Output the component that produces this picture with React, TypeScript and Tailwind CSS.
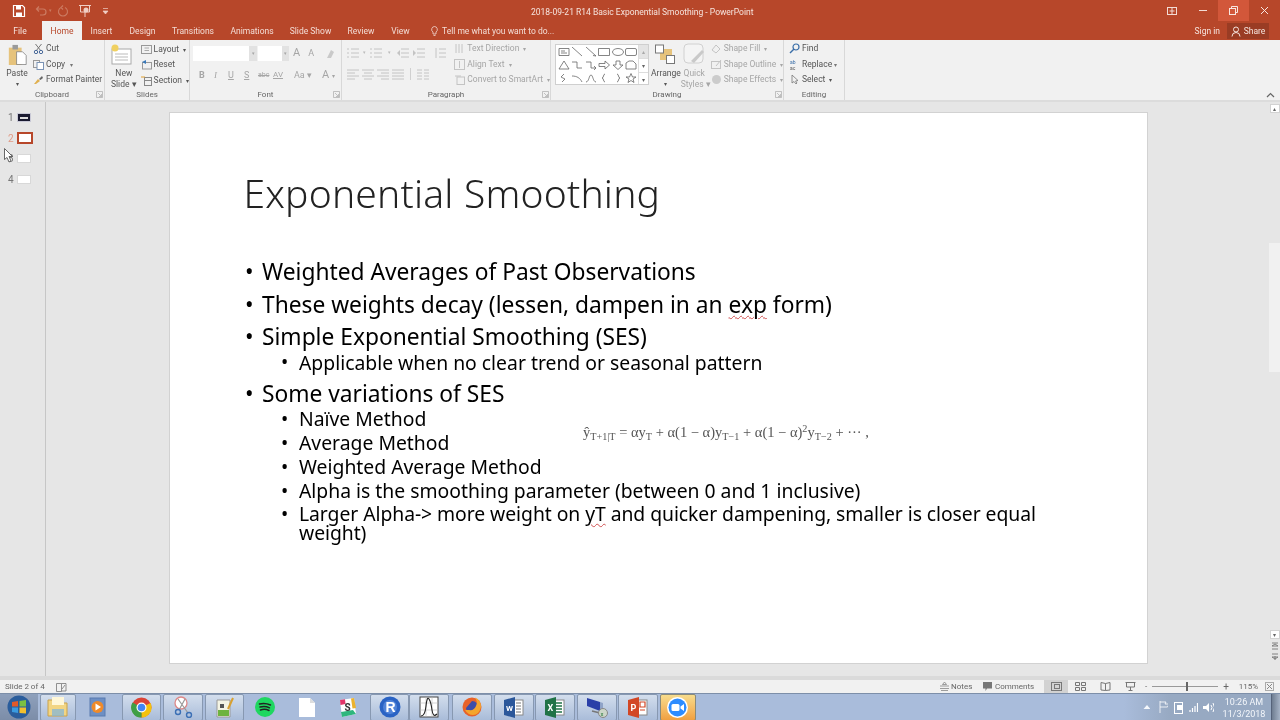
import React from "react";

const L = "#c4c4c4";

function S({ w = 14, h = 14, vb, children, className = "" }: { w?: number; h?: number; vb?: string; children: React.ReactNode; className?: string }) {
  return (
    <svg width={w} height={h} viewBox={vb ?? `0 0 ${w} ${h}`} fill="none" className={`shrink-0 ${className}`}>
      {children}
    </svg>
  );
}

function Tab({ w, children, active }: { w: string; children: React.ReactNode; active?: boolean }) {
  return (
    <div className={`${w} h-[19px] flex items-center justify-center pt-[1px] ${active ? "bg-[#f1f1f1] text-[#b7472a]" : "text-[#f3dcd5]"}`}>
      {children}
    </div>
  );
}

function RowItem({ icon, label, dim, caret, w = "" }: { icon: React.ReactNode; label: string; dim?: boolean; caret?: boolean; w?: string }) {
  return (
    <div className={`flex items-center h-[15.5px] gap-[2px] ${w} ${dim ? "text-[#a6a6a6]" : "text-[#555]"}`}>
      {icon}
      <span className="whitespace-nowrap">{label}</span>
      {caret && <span className="text-[6px] ml-[2px]">▾</span>}
    </div>
  );
}

function Group({ w, label, children, launcher }: { w: string; label: string; children: React.ReactNode; launcher?: boolean }) {
  return (
    <div className={`${w} h-full border-r border-[#d8d8d8] flex flex-col relative shrink-0`}>
      <div className="flex-1 flex min-h-0">{children}</div>
      <div className="h-[12px] text-center text-[8px] leading-[14px] text-[#666]">{label}</div>
      {launcher && (
        <svg width="7" height="7" fill="none" className="absolute right-[1px] bottom-[2px]">
          <path d="M.5 6.500V.5H6.500V6.500ZM2 2 5.500 5.500M5.500 3V5.500H3" stroke="#aaa" strokeWidth=".7" fill="none" />
        </svg>
      )}
    </div>
  );
}

function GalleryShape({ d }: { d: string }) {
  return (
    <svg width="12" height="10" viewBox="0 0 12 10" fill="none" className="shrink-0">
      <path d={d} stroke="#666" strokeWidth=".8" />
    </svg>
  );
}

function Ribbon() {
  return (
    <div className="h-[60px] bg-[#f1f1f1] flex text-[8.500px] shrink-0">
      <Group w="w-[105px]" label="Clipboard" launcher>
        <div className="w-[28px] pl-[6px] pt-[4px] flex flex-col items-center text-[#555]">
          <svg width="21" height="23" viewBox="0 0 21 23">
            <rect x="1" y="4" width="14" height="19" fill="#e6c37c" />
            <rect x="5" y="1" width="6" height="5" fill="#9a9a9a" />
            <path d="M9.500 8.500H16L20 12.500V22.500H9.500Z" fill="#fff" stroke="#777" strokeWidth=".8" />
          </svg>
          <div className="leading-[11px] mt-[3px]">Paste</div>
          <div className="text-[6px] leading-[9px]">▾</div>
        </div>
        <div className="pl-[5px] pt-[1px]">
          <RowItem label="Cut" icon={<S w={11} h={11}><path d="M2.500 1 8 8M8.500 1 3 8" stroke="#777" /><circle cx="3" cy="9" r="1.700" stroke="#4a6a9a" /><circle cx="8" cy="9" r="1.700" stroke="#4a6a9a" /></S>} />
          <RowItem label="Copy" icon={<S w={11} h={11}><rect x=".5" y="1.500" width="6" height="7" stroke="#999" /><rect x="4" y="3.500" width="6.500" height="7" fill="#fff" stroke="#7a93b5" /></S>} />
          <RowItem label="Format Painter" icon={<S w={11} h={11}><path d="M1 10 5 5 7 7 3 10Z" fill="#e0b050" /><path d="M6 5 9 2 10 4 7.500 6Z" fill="#666" /></S>} />
        </div>
        <div className="absolute left-[70px] top-[20px] text-[6px] text-[#777]">▾</div>
      </Group>

      <Group w="w-[85px]" label="Slides">
        <div className="w-[33px] pl-[5px] pt-[3px] text-[#555] text-center leading-[10.500px]">
          <svg width="22" height="23" viewBox="0 0 22 23">
            <rect x="2" y="6" width="19" height="15" fill="#fff" stroke="#aaa" />
            <path d="M5 11H18M5 14H18M5 17H18" stroke="#bbb" />
            <circle cx="5" cy="5" r="3.500" fill="#f0d060" />
          </svg>
          <div className="mt-[2px]">New</div>
          <div className="whitespace-nowrap">Slide ▾</div>
        </div>
        <div className="pl-[3px] pt-[1.500px]">
          <RowItem label="Layout" caret icon={<S w={11} h={11}><rect x=".5" y="1.500" width="10" height="8" stroke="#999" /><path d="M3.500 4H8M3.500 6.500H8" stroke="#aaa" /></S>} />
          <RowItem label="Reset" icon={<S w={11} h={11}><rect x="1.500" y="3.500" width="9" height="6.500" stroke="#999" /><path d="M1 3 5 1V5Z" fill="#3a78b8" /></S>} />
          <RowItem label="Section" caret icon={<S w={11} h={11}><rect x="3.500" y="2.500" width="7" height="8" stroke="#888" /><path d="M3.500 5.500H10.500" stroke="#888" /><path d="M0 2H4" stroke="#e0a030" /></S>} />
        </div>
      </Group>

      <Group w="w-[152px]" label="Font" launcher>
        <div className="pl-[3px] pt-[6px] flex flex-col gap-[6px] text-[#a6a6a6]">
          <div className="flex items-center h-[15px]">
            <div className="w-[56px] h-full bg-white" />
            <div className="w-[8px] h-full bg-[#e2e2e2] text-[5px] flex items-center justify-center">▾</div>
            <div className="w-[24px] h-full bg-white ml-[1px]" />
            <div className="w-[7px] h-full bg-[#e2e2e2] text-[5px] flex items-center justify-center">▾</div>
            <span className="ml-[4px] text-[11px]">A</span>
            <span className="ml-[8px] text-[9px]">A</span>
            <svg width="11" height="12" className="ml-[11px]"><path d="M2 10 6 2 9 4 6 10Z" fill="#c9c9c9" /></svg>
          </div>
          <div className="flex items-center text-[9px] pl-[6px]">
            <b className="w-[15px]">B</b>
            <i className="w-[14px] font-['Liberation_Serif',serif]">I</i>
            <u className="w-[16px]">U</u>
            <u className="w-[14px]">S</u>
            <span className="w-[15px] line-through text-[7px]">abc</span>
            <span className="w-[21px] text-[8px] underline">AV</span>
            <span className="w-[28px] text-[9px] whitespace-nowrap">Aa ▾</span>
            <span className="text-[11px] whitespace-nowrap">A <span className="text-[6px]">▾</span></span>
          </div>
        </div>
      </Group>

      <Group w="w-[209px]" label="Paragraph" launcher>
        <div className="w-[113px] pl-[5px] pt-[7px] flex flex-col gap-[9px]">
          <div className="flex items-center">
            <svg width="12" height="12" viewBox="0 0 12 12"><path d="M0 2H2M4 2H12M0 6H2M4 6H12M0 10H2M4 10H12" stroke={L} fill="none" /></svg>
            <span className="text-[5px] text-[#bbb] w-[11px] text-center">▾</span>
            <svg width="12" height="12" viewBox="0 0 12 12"><path d="M0 2H2M4 2H12M0 6H2M4 6H12M0 10H2M4 10H12" stroke={L} fill="none" /></svg>
            <span className="text-[5px] text-[#bbb] w-[15px] text-center">▾</span>
            <svg width="12" height="12" viewBox="0 0 12 12"><path d="M4 2H12M4 6H12M4 10H12" stroke={L} fill="none" /><path d="M0 6 3 3V9Z" fill={L} /></svg>
            <svg width="12" height="12" viewBox="0 0 12 12" className="ml-[4px]"><path d="M4 2H12M4 6H12M4 10H12" stroke={L} fill="none" /><path d="M3 6 0 3V9Z" fill={L} /></svg>
            <svg width="12" height="12" viewBox="0 0 12 12" className="ml-[9px]"><path d="M2 1V11M5 2H12M5 6H12M5 10H12" stroke={L} fill="none" /></svg>
          </div>
          <div className="flex items-center gap-[3px]">
            {["M0 2H12M0 5H8M0 8H12M0 11H8", "M0 2H12M2 5H10M0 8H12M2 11H10", "M0 2H12M4 5H12M0 8H12M4 11H12", "M0 2H12M0 5H12M0 8H12M0 11H12"].map((d, i) => (
              <svg key={i} width="12" height="12" viewBox="0 0 12 12"><path d={d} stroke={L} fill="none" /></svg>
            ))}
            <div className="w-px h-[12px] bg-[#d0d0d0] mx-[3px]" />
            <svg width="12" height="12" viewBox="0 0 12 12"><path d="M0 2H5M7 2H12M0 5H5M7 5H12M0 8H5M7 8H12M0 11H5M7 11H12" stroke={L} fill="none" /></svg>
          </div>
        </div>
        <div className="pt-[1px]">
          <RowItem dim caret label="Text Direction" icon={<S w={11} h={11}><path d="M2 1V10M5 1V10M8 1V10" stroke={L} /></S>} />
          <RowItem dim caret label="Align Text" icon={<S w={11} h={11}><rect x=".5" y=".5" width="10" height="10" stroke={L} /><path d="M5.500 2V9" stroke={L} /></S>} />
          <RowItem dim caret label="Convert to SmartArt" icon={<S w={11} h={11}><rect x="3" y="3" width="7.500" height="7.500" stroke={L} /><path d="M1 2H7" stroke={L} /></S>} />
        </div>
      </Group>

      <Group w="w-[233px]" label="Drawing" launcher>
        <div className="pl-[4px] pt-[4px] flex">
          <div className="w-[94px] h-[41px] bg-white border border-[#cfcfcf] flex">
            <div className="flex-1 grid grid-cols-6 gap-y-[1.500px] pl-[1px] pt-[1px] items-center justify-items-center">
              <GalleryShape d="M1 1.500H11V8.500H1ZM3 4H7M3 6H9" />
              <GalleryShape d="M1 0 11 9" />
              <GalleryShape d="M1 0 11 9M11 9 8 8.500" />
              <GalleryShape d="M.5 1.500H11.500V8.500H.5Z" />
              <GalleryShape d="M6 1.500C9 1.500 11.500 3 11.500 5S9 8.500 6 8.500.5 7 .5 5 3 1.500 6 1.500Z" />
              <GalleryShape d="M2 1.500H10Q11.500 1.500 11.500 3V7Q11.500 8.500 10 8.500H2Q.5 8.500 .5 7V3Q.5 1.500 2 1.500Z" />
              <GalleryShape d="M6 1 11 9H1Z" />
              <GalleryShape d="M1 2H6V8H11" />
              <GalleryShape d="M1 2H6V8H11M9 6 11 8 9 10" />
              <GalleryShape d="M1 3.500H7V1L11.500 5 7 9V6.500H1Z" />
              <GalleryShape d="M4 1H8V5H11L6 9.500 1 5H4Z" />
              <GalleryShape d="M1 9V3L4 1H8L11 4V9Z" />
              <GalleryShape d="M6 1 3 4 7 6 4 9" />
              <GalleryShape d="M1 3C6 3 9 5 11 9" />
              <GalleryShape d="M1 9C4 9 4 2 6 2S8 9 11 9" />
              <GalleryShape d="M7 1C5 1 6 5 4 5 6 5 5 9 7 9" />
              <GalleryShape d="M5 1C7 1 6 5 8 5 6 5 7 9 5 9" />
              <GalleryShape d="M6 .5 7.500 4H11L8 6 9 9.500 6 7.500 3 9.500 4 6 1 4H4.500Z" />
            </div>
            <div className="w-[10px] flex flex-col border-l border-[#ddd] text-[6px] text-[#666] text-center">
              <div className="flex-1 bg-[#e4e4e4] text-[#aaa] leading-[13px]">▴</div>
              <div className="flex-1 border-y border-[#ddd] leading-[13px]">▾</div>
              <div className="flex-1 leading-[13px]">▾</div>
            </div>
          </div>
        </div>
        <div className="w-[32px] pl-[2px] pt-[3px] text-center text-[#555]">
          <svg width="24" height="22" viewBox="0 0 24 22" className="mx-auto">
            <rect x="6" y="6" width="12" height="11" fill="#e6c37c" />
            <rect x="1.500" y="2" width="8" height="8" fill="#fff" stroke="#777" />
            <rect x="12.500" y="12.500" width="8" height="8" fill="#fff" stroke="#777" />
          </svg>
          <div className="leading-[11px] mt-[3px]">Arrange</div>
          <div className="text-[6px] leading-[9px]">▾</div>
        </div>
        <div className="w-[27px] pt-[3px] text-center text-[#a6a6a6] leading-[10.500px]">
          <svg width="22" height="22" viewBox="0 0 22 22" className="mx-auto">
            <rect x="1" y="1" width="19" height="19" rx="4" fill="#f4f4f4" stroke="#d0d0d0" />
            <path d="M8 18 19 7 21 9 11 20Z" fill="#c9c9c9" />
          </svg>
          <div className="mt-[3px]">Quick</div>
          <div className="whitespace-nowrap">Styles ▾</div>
        </div>
        <div className="pt-[1px] pl-[3px]">
          <RowItem dim caret label="Shape Fill" icon={<S w={11} h={11}><path d="M1 7 5 2 9 6 5 10Z" stroke={L} /></S>} />
          <RowItem dim caret label="Shape Outline" icon={<S w={11} h={11}><rect x=".5" y="2.500" width="9" height="7" stroke={L} /><path d="M5 7 10 1" stroke={L} /></S>} />
          <RowItem dim caret label="Shape Effects" icon={<S w={11} h={11}><circle cx="5.500" cy="5.500" r="4.500" fill="#ccc" /></S>} />
        </div>
      </Group>

      <Group w="w-[61px]" label="Editing">
        <div className="pl-[5px] pt-[1px] text-[#555]">
          <RowItem label="Find" icon={<S w={11} h={11}><circle cx="7" cy="4" r="3" stroke="#3a6ea8" strokeWidth="1.200" /><path d="M5 6 1 10" stroke="#3a6ea8" strokeWidth="1.500" /></S>} />
          <RowItem label="Replace" icon={<S w={11} h={11}><text x="1" y="5" fontSize="5" fill="#3a6ea8">ab</text><text x="1" y="10.500" fontSize="5" fill="#555">ac</text></S>} />
          <RowItem label="Select" caret icon={<S w={11} h={11}><path d="M3 1V9L5 7.500 7 10 8 9 6.500 7 9 6.500Z" stroke="#777" strokeWidth=".8" /></S>} />
        </div>
        <div className="absolute left-[50px] top-[20px] text-[6px] text-[#777]">▾</div>
      </Group>

      <div className="flex-1 relative">
        <svg width="9" height="6" className="absolute right-[5px] bottom-[2px]"><path d="M1 5 4.500 1.500 8 5" stroke="#666" strokeWidth="1.200" fill="none" /></svg>
      </div>
    </div>
  );
}

function Thumb({ n, active, dark }: { n: number; active?: boolean; dark?: boolean }) {
  return (
    <div className="h-[20.500px] flex items-center pl-[8px] gap-[4px]">
      <span className={`text-[10px] w-[5px] ${active ? "text-[#e09a85]" : "text-[#777]"}`}>{n}</span>
      <div className={`flex items-center justify-center ${active ? "border-[#b7472a] border-2 bg-white w-[16px] h-[12px]" : dark ? "w-[14px] h-[9px] border bg-[#1a1a30] border-[#c9c9d6]" : "w-[14px] h-[9px] border bg-white border-[#d8d8d8]"}`}>
        {dark && <div className="w-[8px] h-[2px] bg-[#ddd]" />}
      </div>
    </div>
  );
}

function L1({ children, mt = "" }: { children: React.ReactNode; mt?: string }) {
  return (
    <div className={`flex text-[22.750px] leading-[27px] text-black ${mt}`}>
      <span className="w-[17px] shrink-0">•</span>
      <span className="whitespace-nowrap">{children}</span>
    </div>
  );
}

function L2({ children, h = "h-[24px]" }: { children: React.ReactNode; h?: string }) {
  return (
    <div className={`flex text-[19.350px] leading-[19px] text-black pl-[36px] ${h} items-center`}>
      <span className="w-[18px] shrink-0 self-start leading-[24px]">•</span>
      <span className="leading-[19px]">{children}</span>
    </div>
  );
}

function Slide() {
  return (
    <div className="w-[977px] h-[550px] bg-white shadow-[0_0_0_1px_#d2d2d2] mt-[11px] ml-[124px] pl-[75px] pt-[54px] relative font-['Noto_Sans',sans-serif] shrink-0">
      <div className="text-[39px] leading-[52px] font-light text-[#222] -ml-[1.500px] tracking-[.2px]">Exponential Smoothing</div>
      <div className="mt-[39px] flex flex-col">
        <L1>Weighted Averages of Past Observations</L1>
        <L1 mt="mt-[5.500px]">
          These weights decay (lessen, dampen in an{" "}
          <span className="underline decoration-wavy decoration-[#d05050] decoration-1 underline-offset-2">exp</span> form)
        </L1>
        <L1 mt="mt-[5px]">Simple Exponential Smoothing (SES)</L1>
        <L2 h="h-[25px]">Applicable when no clear trend or seasonal pattern</L2>
        <L1 mt="mt-[5px]">Some variations of SES</L1>
        <L2 h="h-[24px]">Naïve Method</L2>
        <L2>Average Method</L2>
        <L2>Weighted Average Method</L2>
        <L2>Alpha is the smoothing parameter (between 0 and 1 inclusive)</L2>
        <div className="flex text-[19.350px] leading-[19px] text-black pl-[36px] w-[826px] mt-[1px] tracking-[-0.06px]">
          <span className="w-[18px] shrink-0">•</span>
          <span>
            Larger Alpha-&gt; more weight on{" "}
            <span className="underline decoration-wavy decoration-[#d05050] decoration-1 underline-offset-2">yT</span> and quicker dampening, smaller is closer equal weight)
          </span>
        </div>
      </div>
      <div className="absolute left-[413px] top-[309px] font-['Liberation_Serif',serif] text-[14.500px] leading-[20px] text-[#555] whitespace-nowrap">
        ŷ<sub className="text-[10.200px]">T+1|T</sub> = αy<sub className="text-[10.200px]">T</sub> + α(1 − α)y<sub className="text-[10.200px]">T−1</sub> + α(1 − α)<sup className="text-[10.200px]">2</sup>y<sub className="text-[10.200px]">T−2</sub> + ··· ,
      </div>
    </div>
  );
}

function Scrollbar() {
  return (
    <div className="absolute right-0 top-0 bottom-0 w-[11px] flex flex-col items-center pt-[2px] text-[6px] text-[#666] bg-[#e6e6e6]">
      <div className="w-[10px] h-[9px] bg-white border border-[#d2d2d2] leading-[7px] text-center">▴</div>
      <div className="h-[129px] mt-[130px] w-full bg-[#f1f1f1]" />
      <div className="flex-1" />
      <div className="w-[10px] h-[9px] bg-white border border-[#d2d2d2] leading-[7px] text-center">▾</div>
      <svg width="8" height="8" className="mt-[3px]"><path d="M1 1H7M1 4 4 2 7 4Z M1 7H7" stroke="#777" strokeWidth=".9" fill="none" /></svg>
      <svg width="8" height="8" className="mt-[3.500px] mb-[15px]"><path d="M1 1H7M1 4 4 6 7 4ZM4 7V3" stroke="#777" strokeWidth=".9" fill="none" /></svg>
    </div>
  );
}

function StatusBar() {
  return (
    <div className="h-[13px] bg-[#f1f1f1] flex items-center text-[8px] text-[#666] shrink-0">
      <span className="ml-[5px] w-[51px]">Slide 2 of 4</span>
      <svg width="11" height="10"><path d="M.5 1.500H5.500V9.500H.5ZM5.500 1.500H10V9H5.500M6 7 9 3" stroke="#777" strokeWidth=".8" fill="none" /></svg>
      <div className="flex-1" />
      <svg width="9" height="9"><path d="M0 4H9M0 6.500H9M1 8.500H8M4.500 0 2.500 2.500H6.500Z" stroke="#777" strokeWidth=".7" fill="none" /></svg>
      <span className="ml-[2px] w-[32px]">Notes</span>
      <svg width="9" height="9"><path d="M0 0H9V6.500H4L2.500 9V6.500H0Z" fill="#777" /></svg>
      <span className="ml-[3px] w-[49px]">Comments</span>
      <div className="w-[24px] h-full bg-[#d2d2d2] flex items-center justify-center">
        <svg width="11" height="9"><rect x=".5" y=".5" width="10" height="8" stroke="#777" fill="none" /><rect x="3.500" y="2.500" width="5" height="4" stroke="#777" fill="none" /></svg>
      </div>
      <div className="w-[25px] flex justify-center"><svg width="11" height="9"><path d="M.5.5H4.500V3.500H.5ZM6.500.5H10.500V3.500H6.500ZM.5 5.500H4.500V8.500H.5ZM6.500 5.500H10.500V8.500H6.500Z" stroke="#777" fill="none" /></svg></div>
      <div className="w-[25px] flex justify-center"><svg width="11" height="9"><path d="M5.500 1.500 1 .5V8L5.500 8.500 10 8V.5ZM5.500 1.500V8.500" stroke="#777" fill="none" /></svg></div>
      <div className="w-[25px] flex justify-center"><svg width="11" height="9"><path d="M.5.5H10.500M1.500.5V5H9.500V.5M5.500 5V8.500M3.500 8.500H7.500" stroke="#777" fill="none" /></svg></div>
      <div className="w-[7px] ml-[2px] text-[#666] leading-none">-</div>
      <div className="w-[66px] h-[9px] relative flex items-center">
        <div className="w-full h-px bg-[#999]" />
        <div className="absolute left-[34px] top-0 w-[2px] h-[9px] bg-[#666]" />
      </div>
      <div className="w-[12px] text-center text-[10px] leading-none ml-[2px]">+</div>
      <span className="w-[23px] ml-[5px] text-center">115%</span>
      <div className="w-[20px] flex justify-center pr-[2px]"><svg width="9" height="9"><rect x=".5" y=".5" width="8" height="8" stroke="#aaa" fill="none" /><path d="M2 2 7 7M7 2 2 7" stroke="#888" /></svg></div>
    </div>
  );
}

function TB({ w = "w-[41px]", box = true, active, children }: { w?: string; box?: boolean; active?: boolean; children: React.ReactNode }) {
  const look = active
    ? "bg-gradient-to-b from-[#f7dc8c] to-[#f0a040] border border-[#8a8a7a] rounded-[2px]"
    : box
      ? "bg-gradient-to-b from-[#d3deed] to-[#a9bcd9] border border-[#8798b1] rounded-[2px]"
      : "";
  return <div className={`${w} h-[27px] shrink-0 flex items-center justify-center ${look}`}>{children}</div>;
}

function Taskbar() {
  return (
    <div className="h-[27px] bg-[#a9bcdb] border-t border-[#7d8fa9] flex items-center overflow-hidden shrink-0">
      <div className="w-[38px] h-full bg-gradient-to-b from-[#8ea0bc] to-[#7c8da8] flex items-center justify-center">
        <svg width="24" height="24" viewBox="0 0 24 24">
          <circle cx="12" cy="12" r="11.500" fill="#2a5d9c" />
          <path d="M5 7 11 6V11.500H5Z" fill="#e25a2a" />
          <path d="M12.500 6 19 5V11.500H12.500Z" fill="#7cc043" />
          <path d="M5 12.500H11V18L5 17Z" fill="#3a9be0" />
          <path d="M12.500 12.500H19V18.500L12.500 18Z" fill="#f3c02e" />
        </svg>
      </div>
      <div className="w-[2px]" />
      <TB w="w-[36px]">
        <svg width="22" height="22" viewBox="0 0 22 22"><path d="M1 4H9L11 7H20V20H1Z" fill="#f2d583" stroke="#c9a24a" /><rect x="5" y="1" width="12" height="8" fill="#fff7d8" /><path d="M5 13H17V20H5Z" fill="#7db4dc" opacity=".7" /></svg>
      </TB>
      <TB w="w-[44px]" box={false}>
        <svg width="18" height="20" viewBox="0 0 18 20"><rect x="1" y="1" width="15" height="18" fill="#6d8fc4" stroke="#5a7bb0" /><circle cx="8.500" cy="10" r="6" fill="#ef8a2a" /><path d="M6.500 6.500 12 10 6.500 13.500Z" fill="#fff" /></svg>
      </TB>
      <div className="w-[2px]" />
      <TB w="w-[39px]">
        <svg width="21" height="21" viewBox="0 0 21 21"><circle cx="10.500" cy="10.500" r="10" fill="#db4437" /><path d="M10.500 10.500 19.500 6A10 10 0 0 1 10.500 20.500Z" fill="#f4c20d" /><path d="M10.500 10.500 10.500 20.500A10 10 0 0 1 1.500 5.500Z" fill="#3e9f46" /><circle cx="10.500" cy="10.500" r="5" fill="#fff" /><circle cx="10.500" cy="10.500" r="3.800" fill="#4285f4" /></svg>
      </TB>
      <div className="w-[2px]" />
      <TB w="w-[40px]">
        <svg width="22" height="22" viewBox="0 0 22 22"><circle cx="9" cy="7" r="6" fill="#fff" stroke="#d88" strokeWidth="1.300" /><path d="M6 3 16 17M13 3 7 14" stroke="#999" strokeWidth="1.200" /><circle cx="6" cy="16" r="2.500" fill="none" stroke="#3b6fb5" strokeWidth="1.400" /><circle cx="17" cy="19" r="2.500" fill="none" stroke="#3b6fb5" strokeWidth="1.400" /></svg>
      </TB>
      <div className="w-[2px]" />
      <TB w="w-[39px]">
        <svg width="22" height="22" viewBox="0 0 22 22"><path d="M3 4H16V21H3Z" fill="#f4f4e4" stroke="#999" /><rect x="4" y="14" width="11" height="6" fill="#6db33f" /><rect x="6" y="8" width="4" height="4" fill="#555" /><path d="M14 13 19 2" stroke="#d8a030" strokeWidth="2" /></svg>
      </TB>
      <TB w="w-[42px]" box={false}>
        <svg width="20" height="20" viewBox="0 0 20 20"><circle cx="10" cy="10" r="10" fill="#1ed760" /><path d="M4.500 7Q10 5.500 15.500 8M5 10Q10 8.500 14.500 10.800M5.500 13Q10 11.500 14 13.500" stroke="#222" strokeWidth="1.500" fill="none" strokeLinecap="round" /></svg>
      </TB>
      <TB box={false}>
        <svg width="16" height="19" viewBox="0 0 16 19"><path d="M0 0H11L16 5V19H0Z" fill="#fff" /><path d="M11 0V5H16Z" fill="#ddd" /></svg>
      </TB>
      <TB box={false}>
        <svg width="18" height="19" viewBox="0 0 18 19"><path d="M1 2 15 0 17 16 3 19Z" fill="#fff" /><path d="M1 2 6 1.300 6.500 6 1.500 7Z" fill="#e01e5a" opacity=".9" /><path d="M12 .5 15 0 17 10 13.500 10.500Z" fill="#ecb22e" /><path d="M2 14 14 12 17 16 3 19Z" fill="#2eb67d" /><text x="5.500" y="13" fontSize="10" fontWeight="700" fill="#333">S</text></svg>
      </TB>
      <div className="w-[2px]" />
      <TB w="w-[39px]">
        <svg width="22" height="22" viewBox="0 0 22 22"><circle cx="11" cy="11" r="10.500" fill="#2a63c4" /><circle cx="11" cy="11" r="7" fill="#6d9be6" opacity=".6" /><text x="6.500" y="16" fontSize="14" fontWeight="700" fill="#fff" fontFamily="Liberation Sans">R</text></svg>
      </TB>
      <TB w="w-[40px]">
        <svg width="20" height="22" viewBox="0 0 20 22"><rect x="1" y="1" width="18" height="20" fill="#fff" stroke="#444" /><path d="M1 7H19M1 14H19M7 1V21M13 1V21" stroke="#bbb" strokeWidth=".6" /><path d="M2 20Q6 20 7 10T10 3 13 14 18 18" stroke="#222" strokeWidth="1.100" fill="none" /></svg>
      </TB>
      <div className="w-[3px]" />
      <TB w="w-[40px]">
        <svg width="20" height="20" viewBox="0 0 20 20"><circle cx="10" cy="10" r="9.500" fill="#e8622a" /><path d="M10 4A6 6 0 0 1 16 11 6 6 0 0 1 4 11Z" fill="#3d4ea8" /><path d="M3 13Q6 18 11 18 17 18 19 10 19 3 13 .5 16 5 14 9 12 14 7 13Z" fill="#f4a52e" /></svg>
      </TB>
      <div className="w-[1.500px]" />
      <TB w="w-[40px]">
        <svg width="20" height="21" viewBox="0 0 20 21"><rect x="7" y="3" width="12" height="15" fill="#fff" stroke="#888" /><path d="M12 6H17M12 9H17M12 12H17M12 15H17" stroke="#777" /><path d="M0 3 11 0V21L0 18Z" fill="#2b579a" /><text x="2" y="13.500" fontSize="8" fontWeight="700" fill="#fff">W</text></svg>
      </TB>
      <div className="w-[1.500px]" />
      <TB w="w-[40px]">
        <svg width="20" height="21" viewBox="0 0 20 21"><rect x="7" y="3" width="12" height="15" fill="#fff" stroke="#888" /><path d="M11 6H17M11 9H17M11 12H17M11 15H17" stroke="#217346" strokeWidth="1.500" /><path d="M0 3 11 0V21L0 18Z" fill="#217346" /><text x="2.500" y="13.500" fontSize="9" fontWeight="700" fill="#fff">X</text></svg>
      </TB>
      <div className="w-[1.500px]" />
      <TB w="w-[40px]">
        <svg width="22" height="21" viewBox="0 0 22 21"><path d="M1 1 14 5V14L1 9Z" fill="#2a3fa8" /><path d="M14 5 17 6V14L14 14Z" fill="#8fa3c8" /><path d="M6 14 18 17" stroke="#777" strokeWidth="1.500" /><circle cx="17" cy="16" r="4.500" fill="#ccd6c8" stroke="#888" /><text x="14.500" y="18.500" fontSize="6" fill="#2c7a3c">x</text></svg>
      </TB>
      <div className="w-[1.500px]" />
      <TB w="w-[40px]">
        <svg width="20" height="21" viewBox="0 0 20 21"><rect x="7" y="3" width="12" height="15" fill="#fff" stroke="#888" /><path d="M12 5H17V10H12ZM12 13H17" stroke="#d24726" strokeWidth="1.200" fill="none" /><path d="M0 3 11 0V21L0 18Z" fill="#d24726" /><text x="2.500" y="13.500" fontSize="9" fontWeight="700" fill="#fff">P</text></svg>
      </TB>
      <div className="w-[1.500px]" />
      <TB w="w-[36px]" active>
        <svg width="21" height="21" viewBox="0 0 21 21"><circle cx="10.500" cy="10.500" r="10.500" fill="#fff" /><circle cx="10.500" cy="10.500" r="9" fill="#2d8cff" /><rect x="4.500" y="7" width="8" height="7" rx="1.500" fill="#fff" /><path d="M13.500 9.500 17 7V14L13.500 11.500Z" fill="#fff" /></svg>
      </TB>
      <div className="flex-1 h-full" />
      <div className="w-[156px] h-full bg-gradient-to-r from-[#a9bcdb] to-[#97a9c2] to-30% flex items-center text-[#f4f7fb]">
        <svg width="8" height="6" className="ml-[19px]"><path d="M.5 5 4 1 7.500 5Z" fill="#f4f7fb" /></svg>
        <svg width="11" height="12" className="ml-[9px]"><path d="M1 0V12M1 1H7L6 3H10L8.500 6H1" stroke="#fff" fill="none" strokeWidth=".8" /></svg>
        <svg width="11" height="13" className="ml-[6px]"><rect x=".5" y="1.500" width="8" height="11" stroke="#fff" fill="none" /><rect x="3" y="4" width="7.500" height="5" fill="#fff" /></svg>
        <svg width="11" height="10" className="ml-[6px]"><path d="M1 8V10M3.500 6V10M6 4V10M8.500 1V10" stroke="#fff" strokeWidth="1.200" /></svg>
        <svg width="12" height="11" className="ml-[5px]"><path d="M0 4H3L6 1V10L3 7H0Z" fill="#fff" /><path d="M8 3Q10 5.500 8 8M10 1Q13 5.500 10 10" stroke="#fff" fill="none" /></svg>
        <div className="ml-[9px] w-[46px] text-center text-[9px] leading-[12px] pt-[1px]">
          <div>10:26 AM</div>
          <div>11/3/2018</div>
        </div>
        <div className="w-[10px] h-full ml-[6px] bg-gradient-to-r from-[#6f7d91] to-[#a6b3c6] border-l border-[#56637a]" />
      </div>
    </div>
  );
}

export default function App() {
  return (
    <div className="w-[1280px] h-[720px] flex flex-col overflow-hidden bg-[#e6e6e6] relative font-['Roboto',sans-serif] blur-[0.3px]">
      <div className="h-[21px] bg-[#b7472a] flex items-center relative shrink-0">
        <div className="w-[12px]" />
        <svg width="14" height="14" viewBox="0 0 14 14"><path d="M1.500 1.500H10.500L12.500 3.500V12.500H1.500Z" stroke="#fff" fill="none" strokeWidth="1.200" /><rect x="4" y="2" width="5" height="3.500" fill="#fff" /><rect x="4" y="8.500" width="6" height="4" fill="#fff" /></svg>
        <svg width="12" height="12" className="ml-[9px]"><path d="M2 4H8Q11 4 11 7T8 10H5M4 1.500 1.500 4 4 6.500" stroke="#cc7b62" fill="none" strokeWidth="1.200" /></svg>
        <span className="text-[5px] text-[#cc7b62] ml-[2px]">▾</span>
        <svg width="12" height="12" className="ml-[5px]"><path d="M8 2.500A4.500 4.500 0 1 1 4 2.500M6 .5 4 2.500 6 4.500" stroke="#cc7b62" fill="none" strokeWidth="1.100" /></svg>
        <svg width="15" height="14" className="ml-[9px]"><path d="M1 1.500H13M2.500 1.500V8H11.500V1.500M7 8V13" stroke="#f0cfc5" fill="none" /><circle cx="8" cy="6" r="2.500" fill="#f0cfc5" /></svg>
        <svg width="7" height="8" className="ml-[9px]"><path d="M1 1.500H6M1 4 3.500 7 6 4Z" stroke="#f0cfc5" fill="#f0cfc5" strokeWidth=".7" /></svg>
        <div className="absolute left-[531px] top-[6px] w-[216px] text-center text-[8.500px] leading-[12px] text-[#f6e4de] whitespace-nowrap">2018-09-21 R14 Basic Exponential Smoothing - PowerPoint</div>
        <div className="flex-1" />
        <svg width="10" height="8"><rect x=".5" y=".5" width="9" height="7" stroke="#f3dcd5" fill="none" /><path d="M5 .5V7.500M2.500 4H7.500" stroke="#f3dcd5" /></svg>
        <div className="w-[41px] pl-[11px] flex justify-center"><div className="w-[8px] h-px bg-[#f3dcd5]" /></div>
        <div className="w-[31px] h-[21px] bg-[#d2573a] flex items-center justify-center"><svg width="9" height="9"><rect x=".5" y="2.500" width="6" height="6" stroke="#f8e6e0" fill="none" /><path d="M2.500 2.500V.5H8.500V6.500H6.500" stroke="#f8e6e0" fill="none" /></svg></div>
        <div className="w-[31px] flex justify-center"><svg width="9" height="9"><path d="M1 1 8 8M8 1 1 8" stroke="#f8e6e0" /></svg></div>
      </div>

      <div className="h-[19px] bg-[#b7472a] flex items-end text-[8.500px] shrink-0">
        <div className="w-[40px] flex h-[19px] pt-[1px] items-center justify-center text-[#f6e4de]">File</div>
        <div className="w-[2px]" />
        <Tab w="w-[40px]" active>Home</Tab>
        <Tab w="w-[39px]">Insert</Tab>
        <Tab w="w-[43px]">Design</Tab>
        <Tab w="w-[58px]">Transitions</Tab>
        <Tab w="w-[60px]">Animations</Tab>
        <Tab w="w-[57px]">Slide Show</Tab>
        <Tab w="w-[44px]">Review</Tab>
        <Tab w="w-[35px]">View</Tab>
        <div className="ml-[13px] h-[19px] pt-[1px] flex items-center text-[#f3dcd5] whitespace-nowrap gap-[4px]">
          <svg width="7" height="10"><path d="M3.500.5A3 3 0 0 1 5 6V8H2V6A3 3 0 0 1 3.500.5ZM2.500 9.500H4.500" stroke="#f3dcd5" fill="none" strokeWidth=".8" /></svg>
          Tell me what you want to do...
        </div>
        <div className="flex-1" />
        <div className="h-[19px] pt-[1px] flex items-center text-[#f6e4de]">Sign in</div>
        <div className="w-[42px] h-[16px] ml-[7px] mr-[11px] mb-[1px] bg-[#9a3c24] text-[#f6e4de] flex items-center justify-center gap-[3px]">
          <svg width="10" height="11"><circle cx="5" cy="3.500" r="2.500" stroke="#f6e4de" fill="none" /><path d="M1 10.500Q1 6.500 5 6.500T9 10.500" stroke="#f6e4de" fill="none" /></svg>
          Share
        </div>
      </div>

      <Ribbon />

      <div className="h-[2px] bg-[#dcdcdc] shrink-0" />
      <div className="flex-1 flex relative min-h-0 bg-[#e6e6e6]">
        <div className="w-[46px] pt-[5.500px] border-r border-[#c6c6c6] shrink-0">
          <Thumb n={1} dark />
          <Thumb n={2} active />
          <Thumb n={3} />
          <Thumb n={4} />
        </div>
        <Slide />
        <Scrollbar />
        <svg width="10" height="15" viewBox="0 0 10 15" className="absolute left-[4px] top-[46px]">
          <path d="M.5.5V11.500L3 9.500 5 14 7 13 5 8.500H8.500Z" fill="#fff" stroke="#444" strokeWidth=".8" />
        </svg>
      </div>
      <div className="h-[4px] bg-[#dadada] shrink-0" />
      <StatusBar />
      <Taskbar />
    </div>
  );
}
